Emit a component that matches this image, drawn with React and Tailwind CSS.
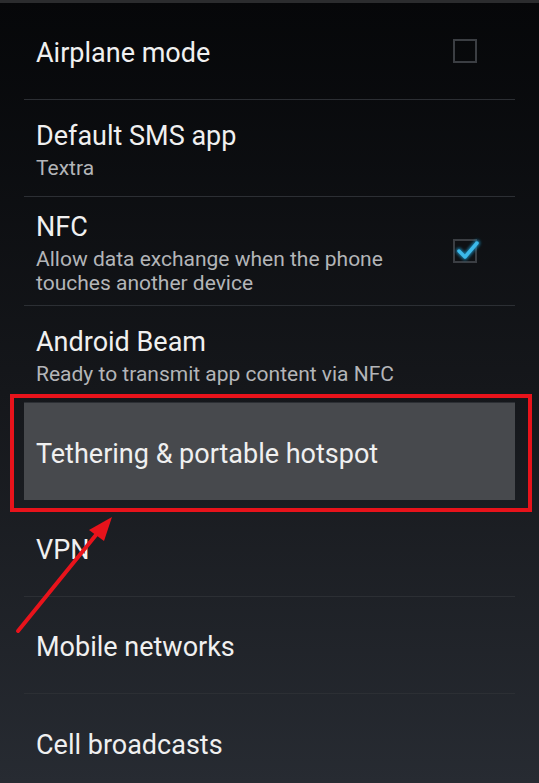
import React from "react";

function Checkbox({ checked }) {
  return (
    <div className="relative w-[24px] h-[24px] border-2 border-[#3b3e43]">
      {checked && (
        <svg className="absolute left-[-2px] top-[-10px]" width="34" height="34" viewBox="0 0 34 34">
          <defs>
            <filter id="glow" x="-50%" y="-50%" width="200%" height="200%">
              <feGaussianBlur stdDeviation="1.6" />
            </filter>
          </defs>
          <path d="M6 20 L12 26 L24 12" fill="none" stroke="#1f8fc0" strokeWidth="6" strokeLinecap="round" strokeLinejoin="round" filter="url(#glow)" opacity="0.8" />
          <path d="M6 20 L12 26 L24 12" fill="none" stroke="#3cb9ea" strokeWidth="3.5" strokeLinecap="round" strokeLinejoin="round" />
        </svg>
      )}
    </div>
  );
}

function Row({ title, sub, check, h = "h-[97px]", highlight, last }) {
  return (
    <div className={`relative mx-6 ${h} flex items-center ${highlight ? "bg-[#47494d]" : ""} ${last ? "" : "border-b border-[#2c2f34]"}`}>
      <div className="flex-1 pl-3 pt-[4px]">
        <div className="text-[27px] leading-[32px] text-[#f0f0f0]">{title}</div>
        {sub && (
          <div className="mt-[4px] text-[21px] leading-[24px] text-[#b3b5b8]">
            {sub.map((s, i) => (
              <div key={i}>{s}</div>
            ))}
          </div>
        )}
      </div>
      {check !== undefined && (
        <div className="mr-[38px]">
          <Checkbox checked={check} />
        </div>
      )}
    </div>
  );
}

export default function App() {
  return (
    <div
      className="relative w-[539px] h-[783px] overflow-hidden bg-gradient-to-b from-[#060709] via-[#15171b] to-[#272b32]"
      style={{ fontFamily: "Roboto, 'Noto Sans', sans-serif" }}
    >
      <div className="h-[3px] bg-[#2b2c2e]" />
      <Row title="Airplane mode" check={false} />
      <Row title="Default SMS app" sub={["Textra"]} />
      <Row title="NFC" sub={["Allow data exchange when the phone", "touches another device"]} check={true} h="h-[109px]" />
      <Row title="Android Beam" sub={["Ready to transmit app content via NFC"]} />
      <Row title="Tethering & portable hotspot" highlight last />
      <Row title="VPN" />
      <Row title="Mobile networks" />
      <Row title="Cell broadcasts" last />

      <div className="absolute left-[10px] top-[394px] w-[522px] h-[118px] border-[4px] border-[#e8131b] pointer-events-none" />
      <svg className="absolute left-0 top-0 pointer-events-none" width="539" height="783" viewBox="0 0 539 783">
        <line x1="18" y1="631" x2="100" y2="530" stroke="#e8131b" strokeWidth="4" strokeLinecap="round" />
        <polygon points="112,517 89,530 104,541" fill="#e8131b" />
      </svg>
    </div>
  );
}
